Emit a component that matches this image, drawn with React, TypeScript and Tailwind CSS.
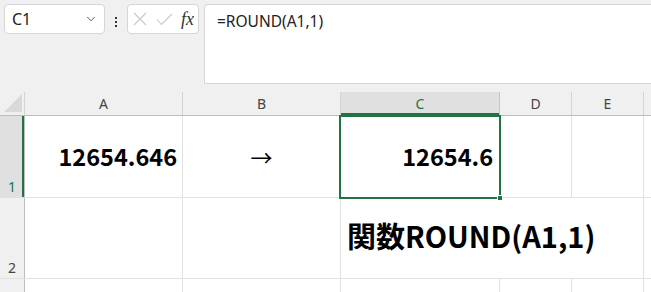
import { ChevronDown } from 'lucide-react'

const cols = [
  { key: 'A', w: 'w-[158px]' },
  { key: 'B', w: 'w-[158px]' },
  { key: 'C', w: 'w-[159px]' },
  { key: 'D', w: 'w-[72px]' },
  { key: 'E', w: 'w-[72px]' },
]

const ui = "font-['Noto_Sans','Noto_Sans_CJK_JP',sans-serif]"
const cellFont = "font-['Noto_Sans_CJK_JP','Noto_Sans',sans-serif]"

function Toolbar() {
  return (
    <div className="flex h-[92px] bg-[#f0f0f0] pl-1 pt-1">
      <div className="flex h-[30px] w-[101px] items-center justify-between rounded border border-[#d6d6d6] bg-white pl-[7px] pr-1.5">
        <span className={`${ui} text-[16px] text-[#222]`}>C1</span>
        <ChevronDown size={14} strokeWidth={1.5} className="text-[#444]" />
      </div>
      <div className="flex w-[22px] items-start justify-center pt-[13px]">
        <div className="flex flex-col gap-[2px]">
          <span className="h-[2px] w-[2px] bg-[#333]" />
          <span className="h-[2px] w-[2px] bg-[#333]" />
          <span className="h-[2px] w-[2px] bg-[#333]" />
        </div>
      </div>
      <div className="flex h-[30px] w-[72px] items-center rounded border border-[#d6d6d6] bg-white pl-[5px]">
        <svg width="14" height="14" viewBox="0 0 14 14" className="text-[#c8c8c8]">
          <path d="M1 1 L13 13 M13 1 L1 13" stroke="currentColor" strokeWidth="1.1" fill="none" />
        </svg>
        <svg width="17" height="13" viewBox="0 0 17 13" className="ml-[9px] text-[#c8c8c8]">
          <path d="M1 6.5 L5.5 11.5 L16 1" stroke="currentColor" strokeWidth="1.1" fill="none" />
        </svg>
        <span className="ml-[8px] font-['Liberation_Serif',serif] text-[18px] italic leading-none text-[#333]">fx</span>
      </div>
      <div className="ml-[5px] h-[80px] flex-1 rounded-tl-[4px] border-b border-l border-t border-[#d6d6d6] bg-white pl-[12px] pt-[4px]">
        <span className={`${ui} text-[15.5px] text-[#222]`}>=ROUND(A1,1)</span>
      </div>
    </div>
  )
}

function HeaderRow() {
  return (
    <div className="flex h-[24px] border-b border-[#bdbdbd] bg-[#f0f0f0]">
      <div className="relative w-[25px] border-r border-[#d4d4d4]">
        <svg width="18" height="18" viewBox="0 0 18 18" className="absolute bottom-[3px] left-[4px]">
          <path d="M18 0 L18 18 L0 18 Z" fill="#d9d9d9" />
        </svg>
      </div>
      {cols.map((c) => (
        <div
          key={c.key}
          className={`${c.w} flex items-center justify-center border-r ${
            c.key === 'C' ? 'border-[#c6c6c6] bg-[#e0e0e0] shadow-[inset_0_-2px_0_#217346]' : 'border-[#d4d4d4]'
          }`}
        >
          <span className={`${ui} text-[14px] ${c.key === 'C' ? 'text-[#217346]' : 'text-[#444]'}`}>{c.key}</span>
        </div>
      ))}
      <div className="flex-1" />
    </div>
  )
}

function Row({
  n,
  h,
  selected,
  cells,
  hidden = [],
}: {
  n: string
  h: string
  selected?: boolean
  cells: Record<string, React.ReactNode>
  hidden?: string[]
}) {
  return (
    <div className={`flex ${h} border-b border-[#e1e1e1]`}>
      <div
        className={`flex w-[25px] items-end justify-center border-r pb-[3px] ${
          selected ? 'border-[#bdbdbd] bg-[#e0e0e0] shadow-[inset_-2px_0_0_#217346]' : 'border-[#bdbdbd] bg-[#f0f0f0]'
        }`}
      >
        <span className={`${ui} text-[14px] leading-none ${selected ? 'text-[#217346]' : 'text-[#444]'}`}>{n}</span>
      </div>
      {cols.map((c) => (
        <div
          key={c.key}
          className={`${c.w} flex items-center border-r ${hidden.includes(c.key) ? 'border-transparent' : 'border-[#e1e1e1]'}`}
        >
          {cells[c.key]}
        </div>
      ))}
      <div className="flex-1" />
    </div>
  )
}

export default function App() {
  return (
    <div className="h-[292px] w-[651px] overflow-hidden bg-white">
      <Toolbar />
      <div className="relative">
        <HeaderRow />
        <Row
          n="1"
          h="h-[82px]"
          selected
          cells={{
            A: <span className={`${cellFont} w-full pr-[5px] text-right text-[23.5px] font-bold text-black`}>12654.646</span>,
            B: <span className={`${cellFont} w-full text-center text-[22px] text-black`}>→</span>,
            C: <span className={`${cellFont} w-full pr-[6px] text-right text-[23.5px] font-bold text-black`}>12654.6</span>,
          }}
        />
        <Row
          n="2"
          h="h-[81px]"
          hidden={['C', 'D']}
          cells={{
            C: (
              <span className={`${cellFont} -mt-[4px] whitespace-nowrap pl-[6px] text-[29px] font-bold text-black`}>
                関数ROUND(A1,1)
              </span>
            ),
          }}
        />
        <Row n="" h="h-[20px]" cells={{}} />
        <div className="pointer-events-none absolute left-[339px] top-[23px] h-[84px] w-[162px] border-2 border-[#217346]">
          <div className="absolute -bottom-[4px] -right-[4px] h-[6px] w-[6px] border border-white bg-[#217346]" />
        </div>
      </div>
    </div>
  )
}
